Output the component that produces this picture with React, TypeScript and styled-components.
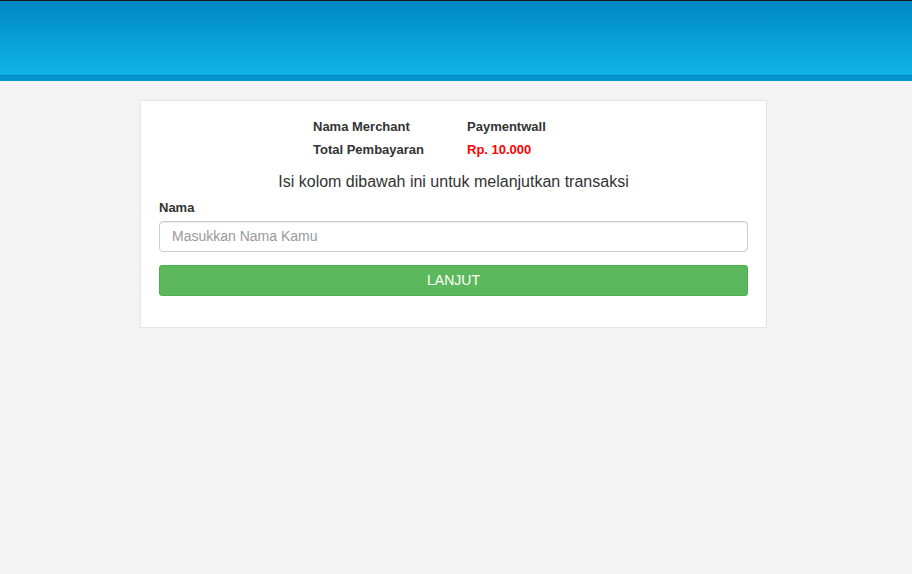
import styled, { createGlobalStyle } from 'styled-components';

const GlobalStyle = createGlobalStyle`
  html, body {
    margin: 0;
    padding: 0;
    background: #f3f3f3;
    font-family: 'Liberation Sans', Arial, sans-serif;
    color: #333;
  }
  * {
    box-sizing: border-box;
  }
`;

const Header = styled.header`
  height: 81px;
  border-top: 1px solid #1a1a1a;
  background: linear-gradient(to bottom, #0086c4 0%, #0aa6dc 65%, #10b3e4 100%);
  border-bottom: 5px solid #0595cd;
  box-shadow: inset 0 -1px 0 #0a86bf;
`;

const Page = styled.div`
  display: flex;
  justify-content: center;
  padding: 19px 5px 0 0;
`;

const Card = styled.div`
  width: 627px;
  background: #fff;
  border: 1px solid #e5e5e5;
  padding: 14px 18px 31px 18px;
`;

const InfoTable = styled.div`
  display: grid;
  grid-template-columns: 154px 127px;
  justify-content: center;
  font-size: 13px;
  font-weight: bold;
  line-height: 23px;
`;

const InfoValue = styled.div<{ $red?: boolean }>`
  color: ${(p) => (p.$red ? '#ff0000' : '#333')};
`;

const Title = styled.h4`
  margin: 10px 0 6px;
  font-size: 16px;
  font-weight: normal;
  line-height: 22px;
  text-align: center;
`;

const Label = styled.label`
  display: block;
  font-size: 13px;
  font-weight: bold;
  line-height: 18px;
  margin-bottom: 4px;
`;

const Input = styled.input`
  display: block;
  width: 100%;
  height: 31px;
  padding: 0 12px 2px;
  border: 1px solid #ccc;
  border-radius: 4px;
  font-family: inherit;
  font-size: 14px;
  color: #555;
  box-shadow: inset 0 1px 1px rgba(0, 0, 0, 0.075);
  outline: none;
  &::placeholder {
    color: #999;
  }
`;

const Button = styled.button`
  display: block;
  width: 100%;
  height: 31px;
  margin-top: 13px;
  padding: 0 0 2px;
  background: #5cb85c;
  border: 1px solid #4cae4c;
  border-radius: 3px;
  color: #fff;
  font-family: inherit;
  font-size: 14px;
  cursor: pointer;
`;

export default function App() {
  return (
    <>
      <GlobalStyle />
      <Header />
      <Page>
        <Card>
          <InfoTable>
            <div>Nama Merchant</div>
            <InfoValue>Paymentwall</InfoValue>
            <div>Total Pembayaran</div>
            <InfoValue $red>Rp. 10.000</InfoValue>
          </InfoTable>
          <Title>Isi kolom dibawah ini untuk melanjutkan transaksi</Title>
          <Label htmlFor='nama'>Nama</Label>
          <Input id='nama' placeholder='Masukkan Nama Kamu' />
          <Button>LANJUT</Button>
        </Card>
      </Page>
    </>
  );
}
